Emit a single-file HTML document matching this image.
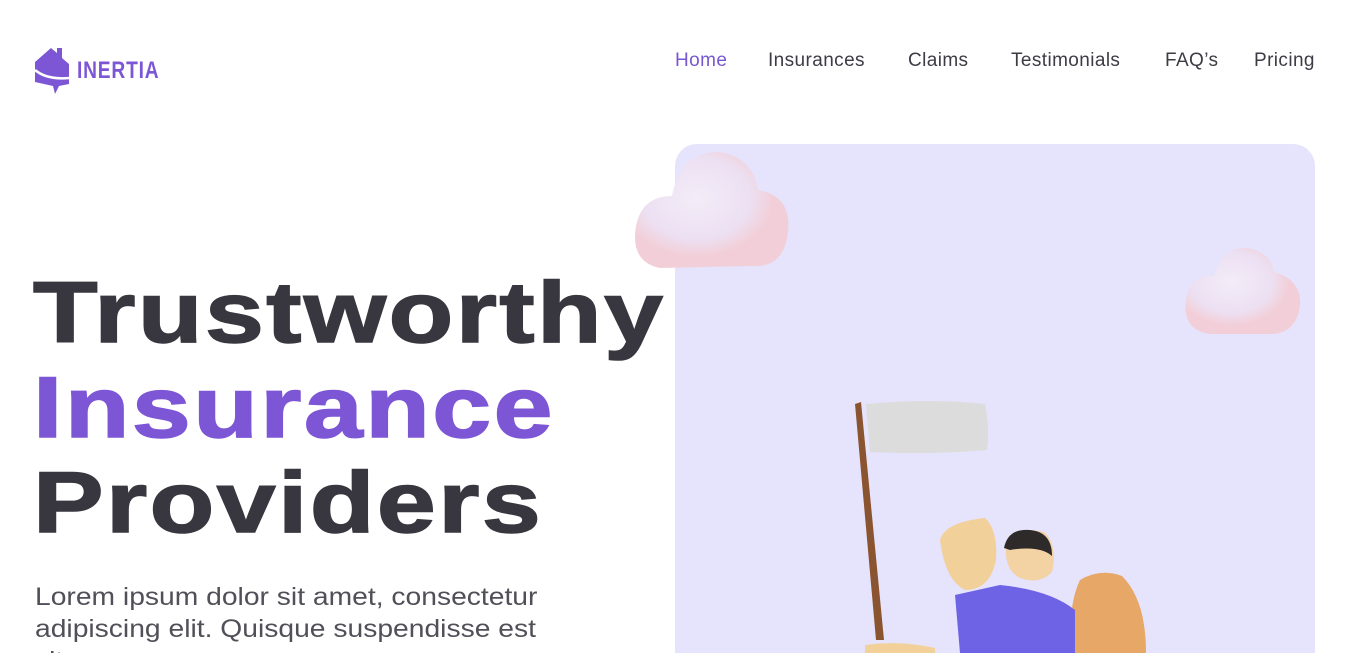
<!DOCTYPE html>
<html><head><meta charset="utf-8"><style>
*{margin:0;padding:0;box-sizing:border-box}
html,body{width:1345px;height:653px;overflow:hidden}
body{background:#fff;font-family:"Liberation Sans",sans-serif;position:relative}
.nav{position:absolute;top:50px;font-size:19px;color:#3d3c44;letter-spacing:.4px}
.panel{position:absolute;left:675px;top:144px;width:640px;height:509px;background:#e6e3fc;border-radius:22px 22px 0 0}
h1{position:absolute;left:33px;top:266px;font-size:86px;line-height:95px;font-weight:bold;color:#38373f;letter-spacing:2px;transform:scaleX(1.23);transform-origin:left top;-webkit-text-stroke:1.5px currentColor}
h1 span{color:#7d56d6}
p{position:absolute;left:35px;top:581px;font-size:25px;line-height:32px;color:#505058;white-space:nowrap;transform:scaleX(1.13);transform-origin:left top}
</style></head><body>
<svg style="position:absolute;left:33px;top:44px" width="40" height="52" viewBox="0 0 40 52">
<path d="M2 18 L18 4 L24 9 L24 4 L29 4 L29 14 L36 20 L36 40 L26 42 L22 50 L20 42 L2 38 Z" fill="#7d56d6"/>
<path d="M2 26 Q14 36 36 34" stroke="#fff" stroke-width="2.5" fill="none"/>
</svg>
<div style="position:absolute;left:77px;top:57px;font-size:24px;font-weight:bold;color:#7d56d6;letter-spacing:1px;transform:scaleX(.8);transform-origin:left">INERTIA</div>
<div class="nav" style="left:675px;color:#7757cf">Home</div>
<div class="nav" style="left:768px">Insurances</div>
<div class="nav" style="left:908px">Claims</div>
<div class="nav" style="left:1011px">Testimonials</div>
<div class="nav" style="left:1165px">FAQ’s</div>
<div class="nav" style="left:1254px">Pricing</div>
<div class="panel"></div>
<svg style="position:absolute;left:0;top:0" width="1345" height="653">
<defs><radialGradient id="c" cx="40%" cy="40%"><stop offset="0" stop-color="#f3ecf8"/><stop offset=".7" stop-color="#ece0f2"/><stop offset="1" stop-color="#f2cfd8"/></radialGradient></defs>
<path d="M660 268 Q630 262 636 226 Q642 196 672 196 Q680 152 718 152 Q752 156 758 190 Q792 196 788 232 Q784 268 752 266 Z" fill="url(#c)"/>
<path d="M1210 334 Q1182 330 1186 300 Q1190 274 1214 276 Q1222 246 1248 248 Q1270 252 1274 272 Q1302 280 1300 306 Q1296 334 1270 334 Z" fill="url(#c)"/>
<path d="M855 404 L861 402 L884 640 L876 640 Z" fill="#8a5431"/>
<path d="M866 404 Q930 398 985 404 Q990 430 987 450 Q930 455 870 452 Z" fill="#dcdcdc"/>
<path d="M1080 580 Q1100 568 1122 576 Q1146 600 1146 653 L1074 653 Q1066 610 1080 580 Z" fill="#e7a766"/>
<path d="M955 595 L1000 585 Q1050 590 1075 610 L1075 653 L960 653 Z" fill="#6e63e4"/>
<path d="M1006 545 Q1020 526 1044 532 Q1058 545 1052 572 Q1040 585 1020 578 Q1004 570 1006 545 Z" fill="#f3d2a4"/>
<path d="M1004 548 Q1008 528 1030 530 Q1052 532 1052 556 Q1040 545 1010 550 Z" fill="#2e2a2a"/>
<path d="M940 540 Q945 522 985 518 Q998 530 996 560 Q990 590 965 590 Q945 580 940 540 Z" fill="#f2d09a"/>
<path d="M865 645 Q900 640 935 648 L935 653 L865 653 Z" fill="#f2d09a"/>
</svg>
<h1>Trustworthy<br><span>Insurance</span><br>Providers</h1>
<p>Lorem ipsum dolor sit amet, consectetur<br>adipiscing elit. Quisque suspendisse est<br>vitae</p>
</body></html>
